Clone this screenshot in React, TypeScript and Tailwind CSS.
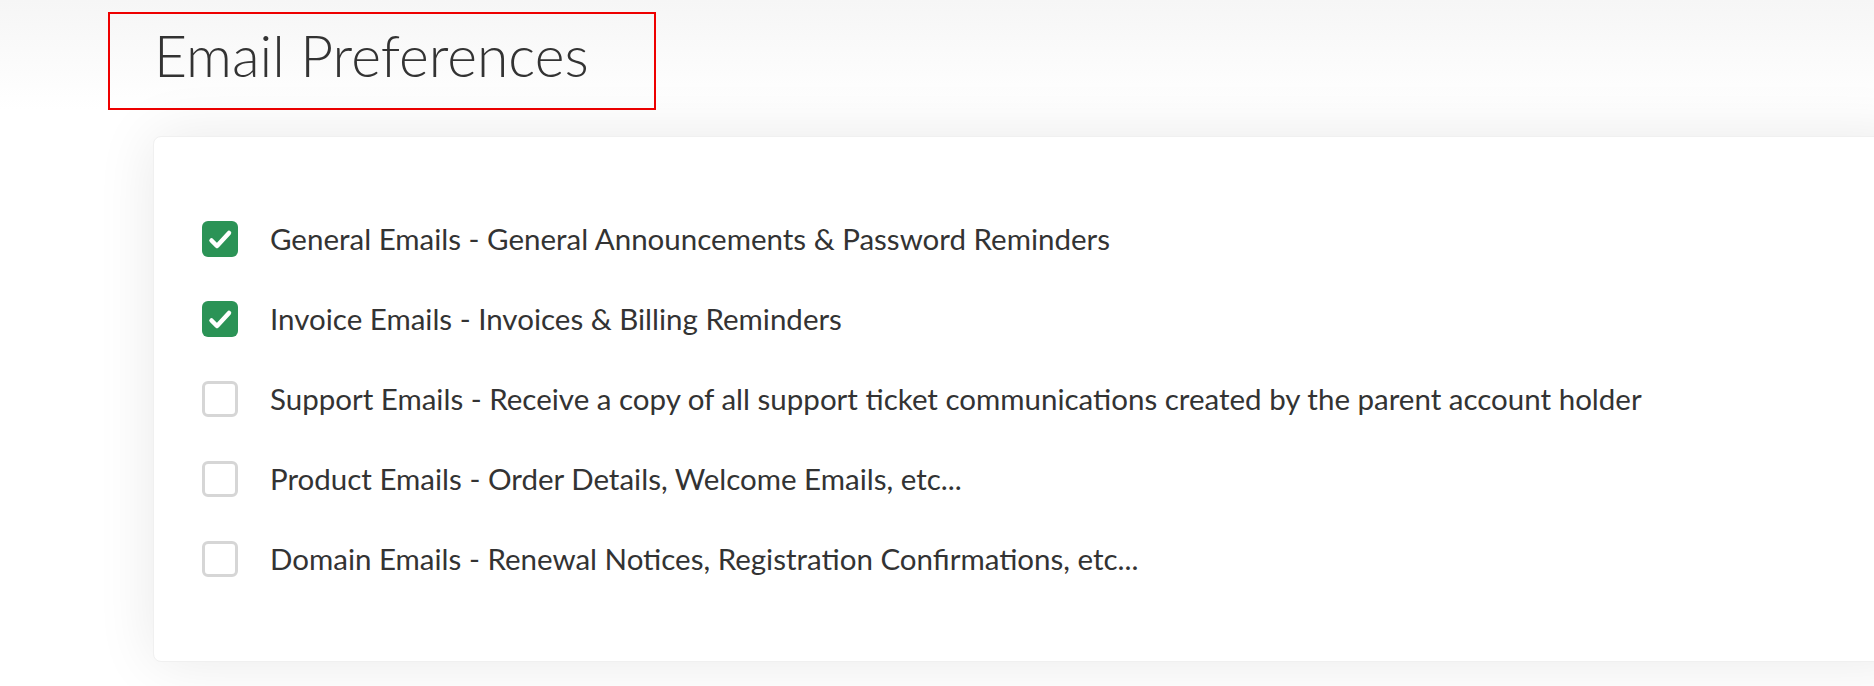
const prefs = [
  { label: "General Emails - General Announcements & Password Reminders", checked: true },
  { label: "Invoice Emails - Invoices & Billing Reminders", checked: true },
  { label: "Support Emails - Receive a copy of all support ticket communications created by the parent account holder", checked: false },
  { label: "Product Emails - Order Details, Welcome Emails, etc...", checked: false },
  { label: "Domain Emails - Renewal Notices, Registration Confirmations, etc...", checked: false },
];

function Box({ checked }: { checked: boolean }) {
  if (checked) {
    return (
      <span className="flex h-9 w-9 shrink-0 rounded-md bg-[#2b9356]">
        <svg viewBox="0 0 36 36" className="h-9 w-9" fill="none" stroke="white" strokeWidth={4.5} strokeLinecap="round" strokeLinejoin="round">
          <path d="M9.5 19.5l5.5 5.5L27 12" />
        </svg>
      </span>
    );
  }
  return <span className="h-9 w-9 shrink-0 rounded-md border-[3px] border-[#d6d6d6] bg-white" />;
}

export default function App() {
  return (
    <div className="min-h-[686px] overflow-hidden bg-white font-['Lato',sans-serif] text-[#333]">
      {/* header */}
      <div className="bg-gradient-to-b from-[#f6f6f6] to-white pt-3">
        <div className="ml-[108px] flex h-[98px] w-[548px] items-start border-2 border-[#ee0000] pl-[44px] pt-[6px]">
          <h1 className="text-[57px] font-light leading-[70px] text-[#333]">Email Preferences</h1>
        </div>
      </div>

      {/* card */}
      <div className="ml-[153px] mt-[26px] w-[1760px] rounded-lg border border-[#f0f0f0] bg-white px-12 py-[84px] shadow-[0_0_60px_rgba(0,0,0,0.09)]">
        <div className="flex flex-col gap-[44px]">
          {prefs.map((p) => (
            <label key={p.label} className="flex items-center gap-[32px]">
              <Box checked={p.checked} />
              <span className="text-[29.5px] leading-9">{p.label}</span>
            </label>
          ))}
        </div>
      </div>
    </div>
  );
}
